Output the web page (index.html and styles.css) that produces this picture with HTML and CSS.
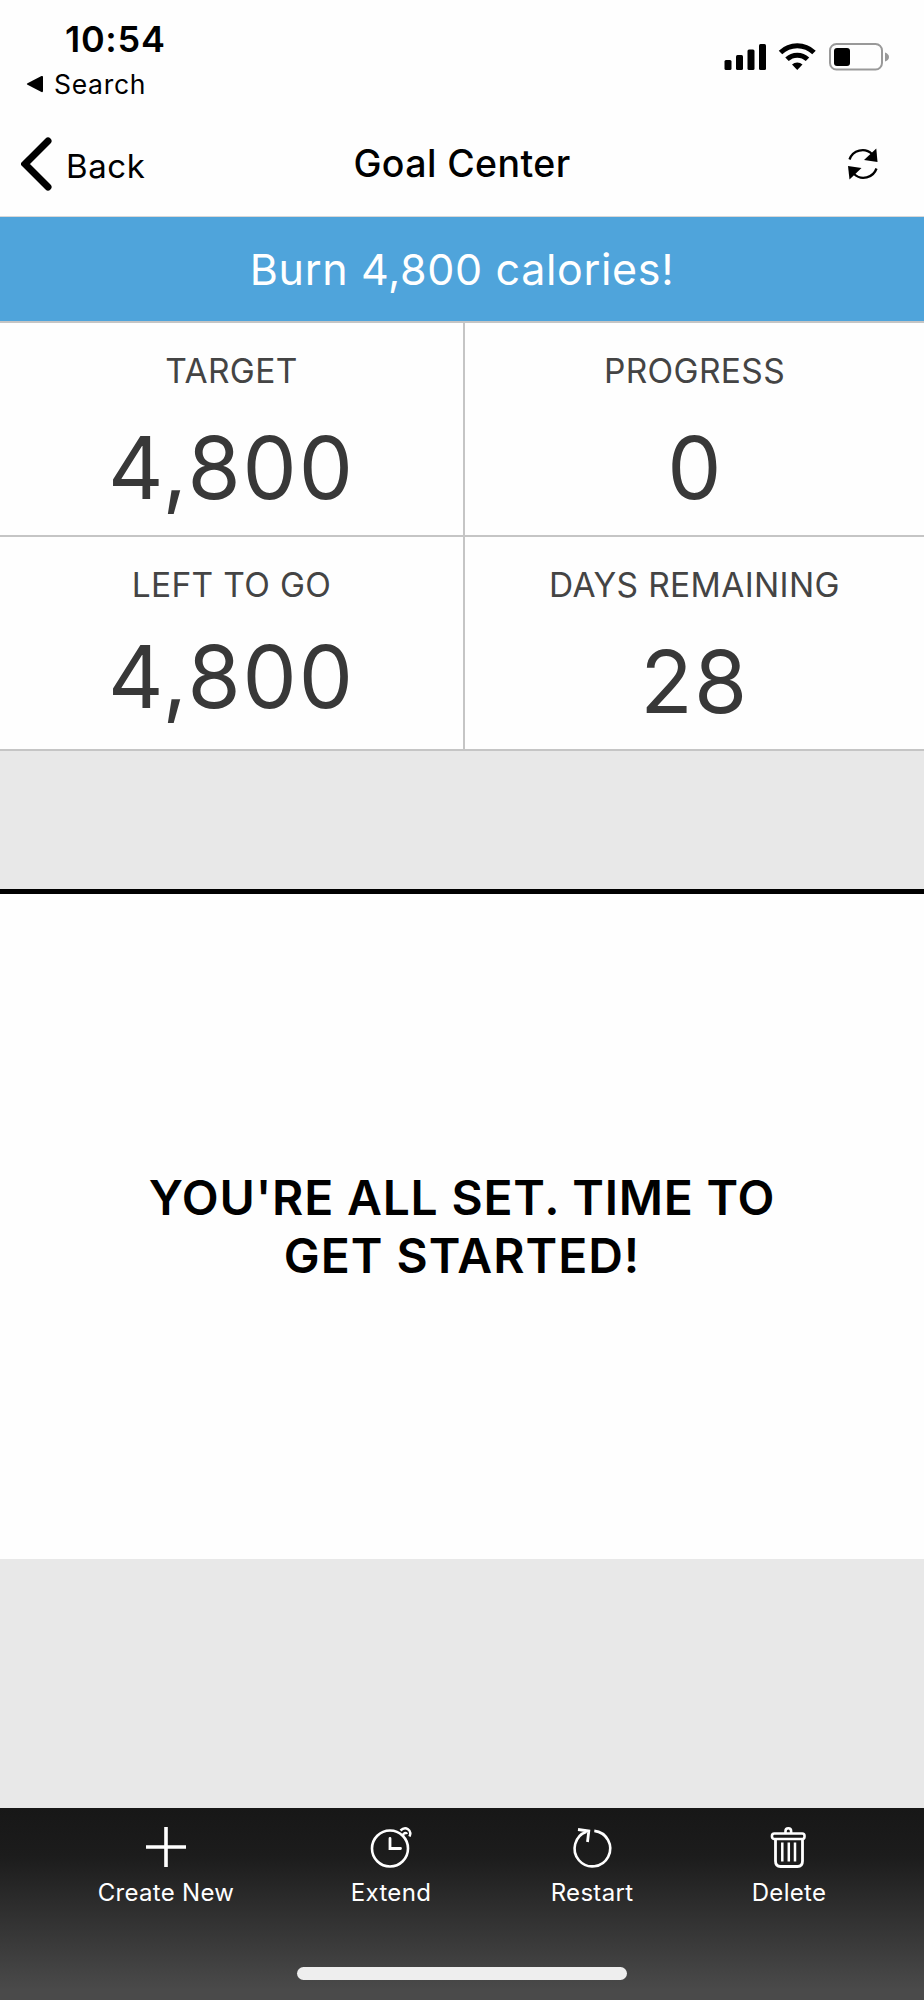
FILE: index.html
```html
<!DOCTYPE html>
<html lang="en">
<head>
<meta charset="utf-8">
<title>Goal Center</title>
<link rel="stylesheet" href="styles.css">
</head>
<body>
<div class="screen">
  <header class="top">
    <div class="status">
      <div class="status-left">
        <div class="time">10:54</div>
        <div class="return"><svg class="tri" viewBox="0 0 18 18"><path d="M1.500 8.200 15.500 1Q17 .5 17 2v14q0 1.500-1.500 1L1.500 9.800Q0 9 1.500 8.200Z"/></svg><span class="search">Search</span></div>
      </div>
      <svg class="status-icons" viewBox="0 0 168 32">
        <rect x="0.500" y="17" width="7" height="10" rx="1.500"/>
        <rect x="12" y="12" width="7" height="15" rx="1.500"/>
        <rect x="23.500" y="6.500" width="7" height="20.500" rx="1.500"/>
        <rect x="35" y="1" width="7" height="26" rx="1.500"/>
        <g fill="none" stroke="#000">
          <path d="M56.500 9.500a24 24 0 0 1 33.500 0" stroke-width="5"/>
          <path d="M63 16.300a14.800 14.800 0 0 1 20.500 0" stroke-width="5"/>
        </g>
        <path d="M68 21.500a8 8 0 0 1 10.500 0L73.250 27Z"/>
        <rect x="106" y="1" width="52" height="25.500" rx="6.500" fill="none" stroke="#999" stroke-width="2"/>
        <rect x="110" y="5" width="16" height="18" rx="3"/>
        <path d="M161 9.500q4 1.500 4 4.500t-4 4.500Z" fill="#999"/>
      </svg>
    </div>
    <nav class="nav">
      <div class="back"><svg class="chev" viewBox="0 0 32 54"><path d="M27 4 4 27l23 23" fill="none" stroke="#000" stroke-width="7" stroke-linecap="round" stroke-linejoin="miter"/></svg><span class="back-text">Back</span></div>
      <h1 class="title">Goal Center</h1>
      <svg class="sync" viewBox="0 0 32 32">
        <path d="M2.500 11.500A13.800 13.800 0 0 1 25 6" fill="none" stroke="#000" stroke-width="2.300"/>
        <path d="M29.300.5 30.500 14 17 12Z"/>
        <path d="M29.500 20.500A13.800 13.800 0 0 1 7 26" fill="none" stroke="#000" stroke-width="2.300"/>
        <path d="M2.500 31.500 1 18l13.500 2Z"/>
      </svg>
    </nav>
  </header>
  <div class="banner"><span class="banner-text">Burn 4,800 calories!</span></div>
  <section class="stats">
    <div class="stat"><span class="label">TARGET</span><span class="value num">4,800</span></div>
    <div class="stat"><span class="label">PROGRESS</span><span class="value">0</span></div>
    <div class="stat raised"><span class="label">LEFT TO GO</span><span class="value num">4,800</span></div>
    <div class="stat"><span class="label">DAYS REMAINING</span><span class="value pair">28</span></div>
  </section>
  <div class="gap"></div>
  <main class="message"><p class="message-text"><span class="line-one">YOU'RE ALL SET. TIME TO</span><br>GET STARTED!</p></main>
  <div class="spacer"></div>
  <footer class="bar">
    <div class="tools">
      <div class="tool create"><svg class="icon" viewBox="0 0 44 44"><path d="M22 2v40M2 22h40" stroke-width="3.600"/></svg><span>Create New</span></div>
      <div class="tool extend"><svg class="icon" viewBox="0 0 44 44"><circle cx="21" cy="23.500" r="18" stroke-width="2.600"/><path d="M21 13.500v10h10.500" stroke-width="2.800" stroke-linecap="round"/><path d="M31.500 5.500C36.500.5 43.500 5 40.500 11.500M34 11c0-3 3-4 4-2" stroke-width="2.500"/></svg><span>Extend</span></div>
      <div class="tool restart"><svg class="icon" viewBox="0 0 44 44"><path d="M24.300 5.900A17.800 17.800 0 1 1 16.500 6.800" stroke-width="2.600"/><path d="M8 4.500 18.800 6 17.500 17" stroke-width="2.800"/></svg><span>Restart</span></div>
      <div class="tool delete"><svg class="icon" viewBox="0 0 44 44"><path d="M8.500 14v22q0 5.500 5 5.500h17q5 0 5-5.500V14" stroke-width="2.800"/><rect x="5" y="8.500" width="32.500" height="5.500" rx="2.300" stroke-width="2.600"/><path d="M18.500 8V6q0-2.800 2.800-2.800T24.100 6v2" stroke-width="2.600"/><path d="M15.300 17.500v19M21.800 17.500v19M28 17.500v19" stroke-width="2.500"/></svg><span>Delete</span></div>
    </div>
    <div class="home"></div>
  </footer>
</div>
</body>
</html>
```

FILE: styles.css
```css
* { box-sizing: border-box; }
body { margin: 0; background: #fefefe; color: #000; font-family: Inter, "Liberation Sans", sans-serif; }
.screen { width: 924px; height: 2000px; display: flex; flex-direction: column; overflow: hidden; }
.screen svg { display: block; flex: none; }
.top { height: 217px; flex: none; border-bottom: 1px solid #d8d8d8; }
.status { display: flex; justify-content: space-between; height: 118px; padding: 18px 32px 0 26px; }
.time { height: 42px; line-height: 42px; margin-left: 39px; font-size: 36px; font-weight: 600; letter-spacing: .7px; }
.return { display: flex; align-items: center; height: 48px; }
.tri { width: 18px; height: 18px; }
.search { margin-left: 10px; font-size: 26.500px; letter-spacing: .7px; }
.status-icons { width: 168px; height: 32px; margin-top: 25px; }
.nav { display: grid; grid-template-columns: 300px 1fr 300px; align-items: center; height: 92px; }
.back { display: flex; align-items: center; padding-left: 21px; }
.chev { width: 32px; height: 54px; }
.back-text { margin-left: 13px; margin-top: 3px; font-size: 33px; letter-spacing: .6px; }
.title { margin: -2px 0 0; text-align: center; font-size: 37.500px; font-weight: 500; letter-spacing: .4px; }
.sync { width: 32px; height: 32px; margin-left: 223px; }
.banner { height: 104px; flex: none; display: flex; align-items: center; justify-content: center; background: #4fa4db; color: #fff; }
.banner-text { margin-top: -1px; font-size: 43px; letter-spacing: .65px; }
.stats { flex: none; height: 430px; display: grid; grid-template-columns: 463px 459px; grid-template-rows: 212px 212px; gap: 2px; padding: 2px 0; background: #c5c5c5; }
.stat { display: flex; flex-direction: column; align-items: center; padding-top: 27px; background: #fefefe; }
.label { height: 42px; line-height: 42px; font-size: 33.500px; letter-spacing: .35px; color: #444; }
.value { margin-top: 24px; height: 104px; line-height: 104px; font-size: 86px; color: #383838; }
.num { letter-spacing: 2px; }
.pair { letter-spacing: 1.500px; }
.raised .value { margin-top: 19px; }
.gap { flex: none; height: 138px; background: #e8e8e8; }
.message { flex: none; height: 670px; border-top: 5px solid #000; padding-top: 1px; display: flex; align-items: center; justify-content: center; }
.message-text { margin: 0; text-align: center; font-size: 48px; line-height: 58px; font-weight: 600; letter-spacing: 1px; }
.line-one { letter-spacing: .8px; }
.spacer { flex: none; height: 249px; background: #e8e8e8; }
.bar { flex: 1; background: linear-gradient(#171717, #1c1c1c 25%, #4a4a4a 95%); padding-top: 17px; }
.tools { display: flex; height: 142px; padding-left: 86px; }
.tool { display: flex; flex-direction: column; align-items: center; color: #fff; font-size: 24px; letter-spacing: .3px; }
.tool span { line-height: 30px; margin-top: 9px; }
.create { width: 160px; }
.extend { width: 160px; margin-left: 65px; }
.restart { width: 160px; margin-left: 41px; }
.delete { width: 160px; margin-left: 37px; }
.icon { width: 44px; height: 44px; fill: none; stroke: #fff; }
.home { width: 330px; height: 13px; margin: 0 auto; border-radius: 7px; background: #eee; }
```
